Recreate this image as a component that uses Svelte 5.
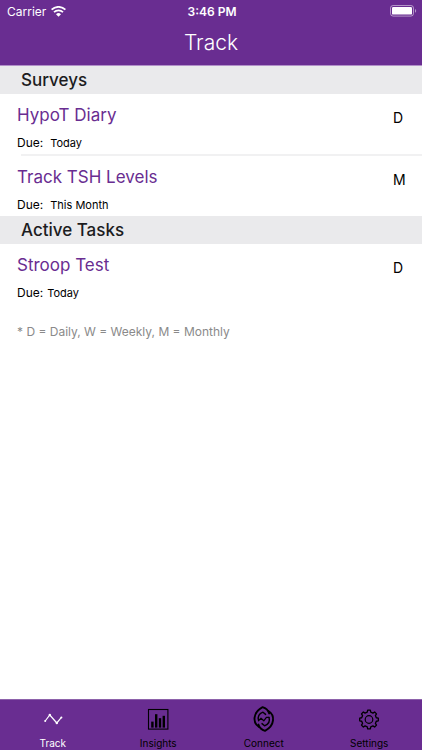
<script>
  let activeTab = $state("Track");

  const sections = [
    {
      title: "Surveys",
      items: [
        { name: "HypoT Diary", due: "Today", freq: "D" },
        { name: "Track TSH Levels", due: "This Month", freq: "M" },
      ],
    },
    {
      title: "Active Tasks",
      compact: true,
      items: [{ name: "Stroop Test", due: "Today", freq: "D" }],
    },
  ];

  const tabs = ["Track", "Insights", "Connect", "Settings"];

  // Outline of the settings cog, rounded off by the stroke joins
  function gearPath(cx, cy, inner, outer, teeth) {
    const step = (Math.PI * 2) / teeth;
    const pts = [];
    for (let i = 0; i < teeth; i++) {
      const a = i * step - Math.PI / 2;
      for (const [off, r] of [[-0.3, inner], [-0.18, outer], [0.18, outer], [0.3, inner]]) {
        const t = a + off * step;
        pts.push(`${(cx + r * Math.cos(t)).toFixed(2)} ${(cy + r * Math.sin(t)).toFixed(2)}`);
      }
    }
    return "M" + pts.join("L") + "Z";
  }
</script>

<div class="screen">
  <header class="top">
    <div class="status">
      <span class="carrier">
        Carrier
        <svg width="15" height="11" viewBox="0 0 15 11" aria-hidden="true">
          <path d="M0.6 3.7a9.8 9.8 0 0 1 13.8 0" fill="none" stroke="#fff" stroke-width="1.8" />
          <path d="M3 6.2a6.4 6.4 0 0 1 9 0" fill="none" stroke="#fff" stroke-width="1.7" />
          <path d="M7.5 10.8L5 8.2a3.6 3.6 0 0 1 5 0z" fill="#fff" />
        </svg>
      </span>
      <span class="time">3:46 PM</span>
      <span class="battery">
        <svg width="27" height="12" viewBox="0 0 27 12" aria-hidden="true">
          <rect x="0.5" y="0.5" width="23" height="10.6" rx="2.6" fill="none" stroke="#fff" stroke-opacity="0.5" />
          <rect x="2" y="2" width="20" height="7.6" rx="1.2" fill="#fff" />
          <path d="M25 4v3.8c1.6-.6 1.6-3.2 0-3.8z" fill="#fff" fill-opacity="0.5" />
        </svg>
      </span>
    </div>
    <h1>Track</h1>
  </header>

  <main>
    {#each sections as section}
      <section>
        <h2>{section.title}</h2>
        <ul>
          {#each section.items as item}
            <li>
              <a class="item" href="#{item.name.toLowerCase().replaceAll(' ', '-')}">
                <span class="info">
                  <span class="name">{item.name}</span>
                  <span class="due" class:compact={section.compact}>
                    <span>Due:</span>
                    <span class="when">{item.due}</span>
                  </span>
                </span>
                <span class="freq">{item.freq}</span>
              </a>
            </li>
          {/each}
        </ul>
      </section>
    {/each}
    <p class="legend">* D = Daily, W = Weekly, M = Monthly</p>
  </main>

  <nav class="tabs">
    {#each tabs as tab}
      <button class="tab" class:active={activeTab === tab} onclick={() => activeTab = tab}>
        <svg width="26" height="26" viewBox="0 0 26 26" fill="none" stroke="currentColor" aria-hidden="true">
          {#if tab === "Track"}
            <path d="M5.2 15L9.8 9l7 8 4.6-5.6" stroke-width="1.2" />
            <g fill="currentColor" stroke="none">
              <circle cx="5.2" cy="15" r="1" />
              <circle cx="9.8" cy="9" r="1.2" />
              <circle cx="16.8" cy="17" r="1.2" />
              <circle cx="21.4" cy="11.4" r="1" />
            </g>
          {:else if tab === "Insights"}
            <rect x="3.5" y="3.5" width="19.4" height="19.6" stroke-width="1.1" />
            <g fill="currentColor" stroke="none">
              <rect x="6.2" y="15.6" width="2.4" height="6" />
              <rect x="10" y="8.2" width="2.4" height="13.4" />
              <rect x="13.8" y="12.2" width="2.4" height="9.4" />
              <rect x="17.6" y="9.8" width="2.4" height="11.8" />
            </g>
          {:else if tab === "Connect"}
            <g stroke-linejoin="round" stroke-linecap="round">
              <path d="M8 21C1.600 17 1.400 6.600 11.600 1.200c3.200 1 5.600 3.200 6.600 6.200" stroke-width="1.9" />
              <path d="M17.400 5C24 9 24.200 19.400 14 24.800c-3.200-1-5.600-3.200-6.600-6.200" stroke-width="1.9" />
              <path d="M7.6 14.600C6.400 10.600 8.400 7.600 12 6.200l2.600 2.200M18 11.400c1.200 4-.8 7-4.400 8.400l-2.600-2.200" stroke-width="1.4" />
              <path d="M7.600 14.600l2.400-2.400 2.800 2.600 2.600-3.400 2.600 0" stroke-width="1.2" />
            </g>
          {:else}
            <path d={gearPath(13, 13.5, 7.5, 9.4, 8)} stroke-width="1.3" stroke-linejoin="round" />
            <circle cx="13" cy="13.5" r="3.8" stroke-width="1.2" />
          {/if}
        </svg>
        <span>{tab}</span>
      </button>
    {/each}
  </nav>
</div>

<style>
  :global(body) {
    margin: 0;
    background: #fff;
  }
  .screen {
    display: flex;
    flex-direction: column;
    min-height: 100vh;
    font-family: Inter, "Liberation Sans", sans-serif;
    color: #000;
  }
  .top {
    background: #692d91;
    border-bottom: 1px solid #b18fc8;
    color: #fff;
  }
  .status {
    display: grid;
    grid-template-columns: 1fr auto 1fr;
    align-items: center;
    height: 22px;
    padding: 0 5px 0 7px;
    font-size: 12px;
  }
  .carrier {
    display: flex;
    align-items: center;
    gap: 5px;
  }
  .time { font-weight: 600; }
  .battery {
    display: flex;
    justify-content: flex-end;
  }
  h1 {
    margin: 0;
    font-size: 21px;
    font-weight: 300;
    line-height: 41px;
    padding-bottom: 2px;
    text-align: center;
  }
  main { flex: 1; }
  h2 {
    margin: 0;
    padding: 0 21px;
    background: #eaeaec;
    color: #1c1c1e;
    font-size: 17px;
    font-weight: 500;
    line-height: 28px;
  }
  ul {
    margin: 0;
    padding: 0;
    list-style: none;
  }
  li + li::before {
    content: "";
    display: block;
    height: 2px;
    margin-left: 21px;
    background: #f1f1f2;
  }
  .item {
    display: flex;
    justify-content: space-between;
    padding: 8px 16px 2px 17px;
    color: inherit;
    text-decoration: none;
  }
  .info {
    display: flex;
    flex-direction: column;
    gap: 6px;
  }
  .name {
    color: #692d91;
    font-size: 17px;
    line-height: 26px;
  }
  .due {
    display: flex;
    align-items: baseline;
    gap: 7px;
    font-size: 12px;
    line-height: 17px;
  }
  .due.compact { gap: 4px; }
  .when { font-size: 11px; }
  .freq {
    width: 13px;
    font-size: 14px;
    line-height: 32px;
  }
  .legend {
    margin: 20px 17px;
    color: #8a8a8a;
    font-size: 12px;
    line-height: 16px;
  }
  .tabs {
    position: sticky;
    bottom: 0;
    display: flex;
    background: #692d91;
    border-top: 1px solid #8d62ab;
  }
  .tab {
    flex: 1;
    display: flex;
    flex-direction: column;
    align-items: center;
    gap: 4px;
    padding: 6px 0 0;
    border: 0;
    background: none;
    color: #000;
    font-family: inherit;
    font-size: 10px;
    line-height: 14px;
    cursor: pointer;
  }
  .tab.active { color: #fff; }
</style>
